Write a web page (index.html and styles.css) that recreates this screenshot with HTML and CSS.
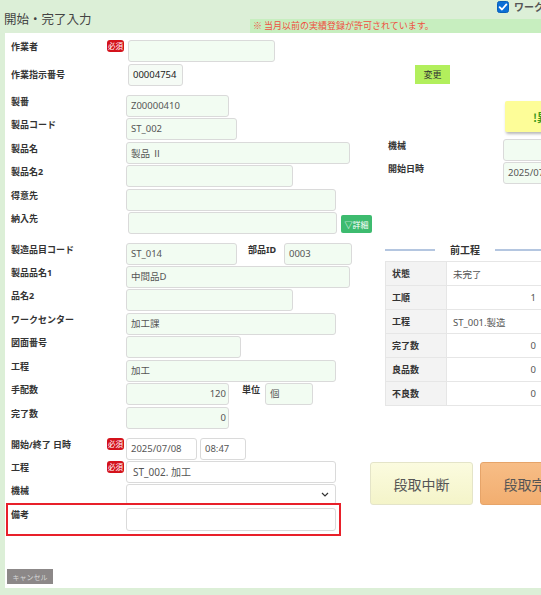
FILE: index.html
```html
<!DOCTYPE html>
<html lang="ja">
<head>
<meta charset="utf-8">
<title>開始・完了入力</title>
<link rel="stylesheet" href="styles.css">
</head>
<body>
<div class="page">
  <header class="hdr">
    <h1 class="title">開始・完了入力</h1>
    <div class="hdr-right">
      <div class="opts">
        <span class="chk"><svg width="12" height="12" viewBox="0 0 12 12"><rect x="0.5" y="0.5" width="11" height="11" rx="2" fill="#0b6fd6" stroke="#0a5fb8"/><path d="M2.6 6.2 L5 8.5 L9.4 3.4" fill="none" stroke="#fff" stroke-width="1.8" stroke-linecap="round" stroke-linejoin="round"/></svg></span>
        <span class="opt-label">ワーク</span>
      </div>
      <div class="notice">※ 当月以前の実績登録が許可されています。</div>
    </div>
  </header>

  <main class="panel">
    <div class="row">
      <div class="lbl">作業者<span class="req">必須</span></div>
      <div class="fields"><div class="fld w147 ml2"></div></div>
    </div>
    <div class="row mt2">
      <div class="lbl mid">作業指示番号</div>
      <div class="fields">
        <div class="fld w55 ml2 dark">00004754</div>
        <button class="btn-chg">変更</button>
      </div>
    </div>

    <div class="cols">
      <div class="left">
        <div class="group">
          <div class="row"><div class="lbl">製番</div><div class="fields"><div class="fld w103">Z00000410</div></div></div>
          <div class="row"><div class="lbl">製品コード</div><div class="fields"><div class="fld w111">ST_002</div></div></div>
          <div class="row"><div class="lbl">製品名</div><div class="fields"><div class="fld w224 cjk">製品 Ⅱ</div></div></div>
          <div class="row"><div class="lbl">製品名2</div><div class="fields"><div class="fld w167"></div></div></div>
          <div class="row"><div class="lbl">得意先</div><div class="fields"><div class="fld w210"></div></div></div>
          <div class="row"><div class="lbl">納入先</div><div class="fields"><div class="fld w209 ml2"></div><button class="btn-detail">▽詳細</button></div></div>
        </div>

        <div class="group g2">
          <div class="row"><div class="lbl">製造品目コード</div><div class="fields"><div class="fld w111">ST_014</div><div class="sublbl w36">部品ID</div><div class="fld w68">0003</div></div></div>
          <div class="row"><div class="lbl">製品品名1</div><div class="fields"><div class="fld w224">中間品D</div></div></div>
          <div class="row"><div class="lbl">品名2</div><div class="fields"><div class="fld w167"></div></div></div>
          <div class="row"><div class="lbl">ワークセンター</div><div class="fields"><div class="fld w210">加工課</div></div></div>
          <div class="row"><div class="lbl">図面番号</div><div class="fields"><div class="fld w115"></div></div></div>
          <div class="row"><div class="lbl">工程</div><div class="fields"><div class="fld w210">加工</div></div></div>
          <div class="row"><div class="lbl">手配数</div><div class="fields"><div class="fld w103 num">120</div><div class="sublbl unit">単位</div><div class="fld w48">個</div></div></div>
          <div class="row"><div class="lbl">完了数</div><div class="fields"><div class="fld w103 num">0</div></div></div>
        </div>

        <div class="group g3">
          <div class="row"><div class="lbl">開始/終了 日時<span class="req">必須</span></div><div class="fields"><div class="fld w71 white">2025/07/08</div><div class="fld w46 white ml3">08:47</div></div></div>
          <div class="row"><div class="lbl">工程<span class="req">必須</span></div><div class="fields"><div class="fld w210 white big">ST_002. 加工</div></div></div>
          <div class="row"><div class="lbl">機械</div><div class="fields"><div class="fld w210 white sel"><svg width="8" height="5" viewBox="0 0 8 5"><path d="M1 1 L4 4 L7 1" fill="none" stroke="#333" stroke-width="1.2"/></svg></div></div></div>
          <div class="row remarks"><div class="lbl">備考</div><div class="fields"><div class="fld w210 white tall"></div></div></div>
        </div>
      </div>

      <div class="right">
        <button class="btn-alert">!異常連絡</button>
        <div class="rrow first"><div class="lbl">機械</div><div class="fld w100"></div></div>
        <div class="rrow"><div class="lbl">開始日時</div><div class="fld w100">2025/07/08 08:47</div></div>

        <div class="prev">
          <div class="prev-title"><span class="line"></span><span class="prev-text">前工程</span><span class="line"></span></div>
          <table class="prev-table">
            <tr><th>状態</th><td>未完了</td></tr>
            <tr><th>工順</th><td class="r">1</td></tr>
            <tr><th>工程</th><td>ST_001.製造</td></tr>
            <tr><th>完了数</th><td class="r">0</td></tr>
            <tr><th>良品数</th><td class="r">0</td></tr>
            <tr><th>不良数</th><td class="r">0</td></tr>
          </table>
        </div>

        <div class="actions">
          <button class="act pause">段取中断</button>
          <button class="act done">段取完了</button>
        </div>
      </div>
    </div>

    <div class="footer"><button class="btn-cancel">キャンセル</button></div>
  </main>
</div>
</body>
</html>
```

FILE: styles.css
```css
body {
  margin: 0;
  background: #dcefd7;
  font-family: "Noto Sans", "Noto Sans CJK JP", sans-serif;
  color: #333;
  overflow: hidden;
}

.page {
  width: 720px;
}

/* header */
.hdr {
  display: flex;
  height: 33px;
}

.title {
  margin: 0;
  width: 246px;
  padding: 11px 0 0 4px;
  font-family: "Noto Sans CJK JP", sans-serif;
  font-size: 12.5px;
  line-height: 16px;
  font-weight: normal;
  color: #444;
}

.hdr-right {
  flex: 1;
  display: flex;
  flex-direction: column;
}

.opts {
  height: 19px;
  box-sizing: border-box;
  display: flex;
  align-items: flex-start;
  gap: 5px;
  padding: 1px 0 0 247px;
}

.chk {
  display: flex;
  width: 12px;
  height: 12px;
}

.opt-label {
  font-family: "Noto Sans CJK JP", sans-serif;
  font-size: 10px;
  line-height: 12px;
  font-weight: bold;
  color: #555;
}

.notice {
  height: 14px;
  background: #c7eebf;
  color: #ef4f3f;
  font-family: "Noto Sans CJK JP", sans-serif;
  font-size: 9px;
  line-height: 14px;
  padding-left: 3px;
}

/* panel */
.panel {
  background: #fff;
  margin-left: 5px;
  padding: 7px 0 10px 6px;
  height: 538px;
}

.row {
  display: grid;
  grid-template-columns: 115px auto;
  align-items: start;
}

.mt2 {
  margin-top: 2px;
}

.lbl {
  display: flex;
  justify-content: space-between;
  align-items: flex-start;
  font-family: "Noto Sans", "Noto Sans CJK JP", sans-serif;
  font-size: 9px;
  line-height: 11px;
  padding-top: 1px;
  font-weight: bold;
  color: #333;
  white-space: nowrap;
}

.lbl.mid {
  padding-top: 5px;
}

.req {
  width: 17px;
  height: 12px;
  margin-top: -1px;
  margin-right: 2px;
  background: #d4121b;
  color: #fff;
  border-radius: 3px;
  font-size: 7.5px;
  line-height: 12px;
  text-align: center;
  font-weight: normal;
}

.fields {
  display: flex;
  align-items: flex-start;
}

.fld {
  box-sizing: border-box;
  height: 22px;
  border: 1px solid #dadada;
  border-radius: 3px;
  background: #f2fcf2;
  font-family: "Noto Sans", "Noto Sans CJK JP", sans-serif;
  font-size: 9.5px;
  line-height: 20px;
  color: #555;
  padding: 0 4px;
  white-space: nowrap;
  overflow: hidden;
}

.fld.cjk { font-family: "Noto Sans CJK JP", sans-serif; }
.fld.dark { color: #222; background: #f5fbf5; }
.fld.white { background: #fff; }
.fld.num { text-align: right; padding-right: 2px; }
.fld.big { font-size: 10px; padding-left: 6px; }
.fld.tall { height: 23px; }
.fld.sel {
  display: flex;
  justify-content: flex-end;
  align-items: center;
  height: 21px;
  padding-right: 6px;
}

.w36 { width: 36px; }
.w46 { width: 46px; }
.w48 { width: 48px; }
.w55 { width: 55px; }
.w68 { width: 68px; }
.w71 { width: 71px; }
.w100 { width: 100px; }
.w103 { width: 103px; }
.w111 { width: 111px; }
.w115 { width: 115px; }
.w147 { width: 147px; }
.w167 { width: 167px; }
.w209 { width: 209px; }
.w210 { width: 210px; }
.w224 { width: 224px; }
.ml2 { margin-left: 2px; }
.ml3 { margin-left: 3px; }

.sublbl {
  font-size: 9px;
  line-height: 11px;
  padding-top: 1px;
  font-weight: bold;
  color: #333;
  margin-left: 11px;
  white-space: nowrap;
}

.sublbl.unit {
  width: 23px;
  margin-left: 13px;
}

.btn-chg {
  margin: 1px 0 0 232px;
  width: 35px;
  height: 19px;
  border: none;
  padding: 0;
  background: #b2ef5c;
  color: #333;
  font-family: "Noto Sans CJK JP", sans-serif;
  font-size: 9px;
}

.btn-detail {
  margin: 3px 0 0 4px;
  width: 31px;
  height: 18px;
  border: none;
  border-radius: 2px;
  padding: 0;
  background: #3dbb6f;
  color: #fff;
  font-family: "Noto Sans CJK JP", sans-serif;
  font-size: 8px;
}

/* columns */
.cols {
  display: grid;
  grid-template-columns: 359px 1fr;
  margin-top: 9px;
}

.group {
  display: flex;
  flex-direction: column;
  gap: 1.43px;
}

.g2 { margin-top: 8.5px; }
.g3 { margin-top: 9px; }

.remarks {
  width: fit-content;
  outline: 2px solid #e8202a;
  outline-offset: 3px;
  margin-top: 1px;
}

/* right column */
.right {
  display: flex;
  flex-direction: column;
  align-items: flex-start;
}

.btn-alert {
  margin: 6px 0 0 135px;
  width: 150px;
  height: 31px;
  border: none;
  border-radius: 2px;
  background: #fdfd98;
  box-shadow: 1px 2px 3px rgba(0, 0, 0, 0.28);
  color: #3f9a1c;
  font-family: "Noto Sans CJK JP", sans-serif;
  font-weight: bold;
  font-size: 11px;
  text-align: left;
  padding: 0 0 0 28px;
}

.rrow {
  display: grid;
  grid-template-columns: 115px auto;
  padding-left: 18px;
  margin-top: 1.4px;
}

.rrow.first { margin-top: 7px; }

.prev {
  margin: 59px 0 0 15px;
  width: 160px;
}

.prev-title {
  display: flex;
  align-items: center;
  height: 14px;
}

.prev-title .line {
  flex: 1;
  height: 2px;
  background: #b4c6e0;
}

.prev-text {
  margin: 0 15px;
  font-size: 10px;
  line-height: 14px;
  font-weight: bold;
  color: #333;
}

.prev-table {
  margin-top: 4px;
  width: 160px;
  border-collapse: collapse;
  font-family: "Noto Sans", "Noto Sans CJK JP", sans-serif;
}

.prev-table th,
.prev-table td {
  height: 23px;
  padding: 0 6px;
  border: 1px solid #e6e6e6;
  text-align: left;
}

.prev-table th {
  width: 48px;
  background: #f3f3f3;
  font-size: 9px;
  font-weight: bold;
  color: #333;
}

.prev-table td {
  background: #fff;
  font-size: 9.5px;
  color: #555;
}

.prev-table td.r {
  text-align: right;
  padding-right: 8px;
}

.actions {
  display: flex;
  gap: 7px;
  margin-top: 56px;
}

.act {
  width: 103px;
  height: 43px;
  border-radius: 3px;
  font-family: "Noto Sans CJK JP", sans-serif;
  font-size: 14px;
  color: #555;
  padding: 0;
}

.act.pause {
  background: linear-gradient(#fbfbdf, #f4f4c9);
  border: 1px solid #e4e4c8;
}

.act.done {
  background: linear-gradient(#f7bd86, #f2ae70);
  border: 1px solid #e6a469;
}

/* footer */
.footer {
  margin-top: 32px;
  margin-left: -4px;
}

.btn-cancel {
  width: 46px;
  height: 15px;
  border: none;
  padding: 0;
  background: #8c8888;
  color: #d8d8d8;
  font-family: "Noto Sans CJK JP", sans-serif;
  font-size: 7px;
}
```
